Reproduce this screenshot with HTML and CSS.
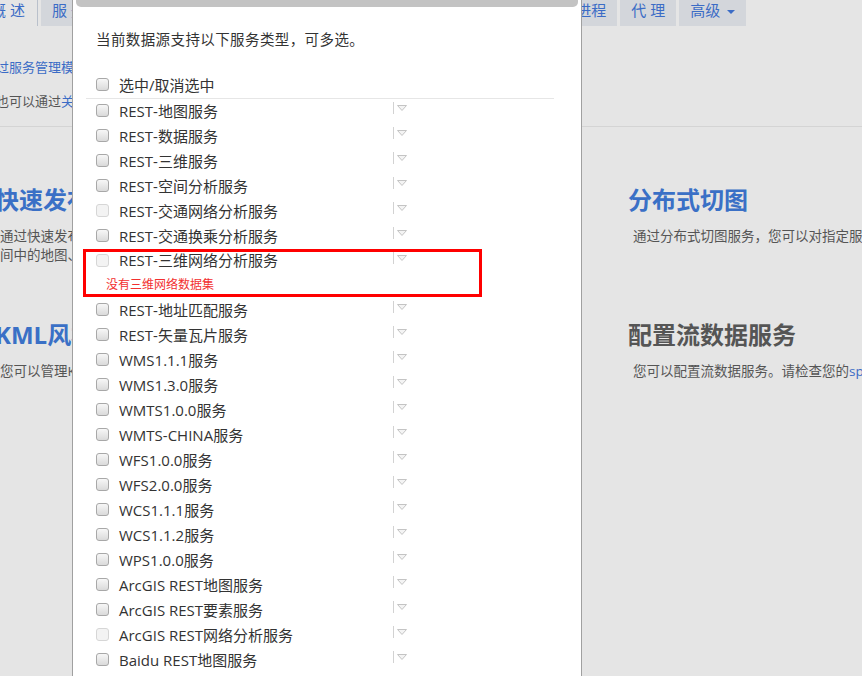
FILE: index.html
```html
<!DOCTYPE html>
<html lang="zh-CN">
<head>
<meta charset="utf-8">
<title>服务管理</title>
<link rel="stylesheet" href="styles.css">
</head>
<body>
<div class="page">
  <nav class="tabs">
    <a class="tab tab-current">概 述</a>
    <a class="tab">服 务</a>
    <a class="tab">集 群</a>
    <a class="tab">安 全</a>
    <a class="tab">日 志</a>
    <a class="tab">监 控</a>
    <a class="tab">扩 展</a>
    <a class="tab">许 可</a>
    <a class="tab tab-wide">系统</a>
    <a class="tab">存储</a>
    <a class="tab">进程</a>
    <a class="tab">代 理</a>
    <a class="tab">高级<span class="caret"></span></a>
  </nav>

  <section class="intro">
    <p><span class="link">过服务管理模块，您可以发布、管理和监控各种类型的 GIS 服务。</span></p>
    <p>也可以通过<span class="link">关联服务</span>，在多个服务之间建立关联。</p>
  </section>
  <hr class="rule">

  <section class="features">
    <div class="feature">
      <h2 class="feature-title">快速发布服务</h2>
      <p class="feature-text">通过快速发布服务，您可以将存储在数据源、工作空<br>间中的地图、数据等资源发布为多种类型的服务。</p>
    </div>
    <div class="feature">
      <h2 class="feature-title">分布式切图</h2>
      <p class="feature-text">通过分布式切图服务，您可以对指定服务中的地图进行切图。</p>
    </div>
    <div class="feature">
      <h2 class="feature-title">KML风格管理</h2>
      <p class="feature-text">您可以管理KML风格文件。</p>
    </div>
    <div class="feature">
      <h2 class="feature-title feature-title-dark">配置流数据服务</h2>
      <p class="feature-text">您可以配置流数据服务。请检查您的<span class="link">spark</span>环境。</p>
    </div>
  </section>
</div>

<div class="modal">
  <div class="modal-top"></div>
  <div class="modal-body">
    <p class="modal-desc">当前数据源支持以下服务类型，可多选。</p>
    <label class="select-all"><input type="checkbox" class="cb"><span class="select-all-text">选中/取消选中</span></label>
    <ul class="svc-list">
      <li class="svc"><input type="checkbox" class="cb"><span class="svc-name">REST-地图服务</span><span class="svc-more"><svg width="10" height="6" viewBox="0 0 10 6"><polygon points="0.5,0.5 9.5,0.5 5,5.5" fill="#f4f4f4" stroke="#c4c4c4" stroke-width="1"/></svg></span></li>
      <li class="svc"><input type="checkbox" class="cb"><span class="svc-name">REST-数据服务</span><span class="svc-more"><svg width="10" height="6" viewBox="0 0 10 6"><polygon points="0.5,0.5 9.5,0.5 5,5.5" fill="#f4f4f4" stroke="#c4c4c4" stroke-width="1"/></svg></span></li>
      <li class="svc"><input type="checkbox" class="cb"><span class="svc-name">REST-三维服务</span><span class="svc-more"><svg width="10" height="6" viewBox="0 0 10 6"><polygon points="0.5,0.5 9.5,0.5 5,5.5" fill="#f4f4f4" stroke="#c4c4c4" stroke-width="1"/></svg></span></li>
      <li class="svc"><input type="checkbox" class="cb"><span class="svc-name">REST-空间分析服务</span><span class="svc-more"><svg width="10" height="6" viewBox="0 0 10 6"><polygon points="0.5,0.5 9.5,0.5 5,5.5" fill="#f4f4f4" stroke="#c4c4c4" stroke-width="1"/></svg></span></li>
      <li class="svc"><input type="checkbox" class="cb" disabled><span class="svc-name">REST-交通网络分析服务</span><span class="svc-more"><svg width="10" height="6" viewBox="0 0 10 6"><polygon points="0.5,0.5 9.5,0.5 5,5.5" fill="#f4f4f4" stroke="#c4c4c4" stroke-width="1"/></svg></span></li>
      <li class="svc"><input type="checkbox" class="cb"><span class="svc-name">REST-交通换乘分析服务</span><span class="svc-more"><svg width="10" height="6" viewBox="0 0 10 6"><polygon points="0.5,0.5 9.5,0.5 5,5.5" fill="#f4f4f4" stroke="#c4c4c4" stroke-width="1"/></svg></span></li>
      <li class="svc-error-box">
        <div class="svc svc-boxed"><input type="checkbox" class="cb" disabled><span class="svc-name">REST-三维网络分析服务</span><span class="svc-more"><svg width="10" height="6" viewBox="0 0 10 6"><polygon points="0.5,0.5 9.5,0.5 5,5.5" fill="#f4f4f4" stroke="#c4c4c4" stroke-width="1"/></svg></span></div>
        <p class="svc-error">没有三维网络数据集</p>
      </li>
      <li class="svc"><input type="checkbox" class="cb"><span class="svc-name">REST-地址匹配服务</span><span class="svc-more"><svg width="10" height="6" viewBox="0 0 10 6"><polygon points="0.5,0.5 9.5,0.5 5,5.5" fill="#f4f4f4" stroke="#c4c4c4" stroke-width="1"/></svg></span></li>
      <li class="svc"><input type="checkbox" class="cb"><span class="svc-name">REST-矢量瓦片服务</span><span class="svc-more"><svg width="10" height="6" viewBox="0 0 10 6"><polygon points="0.5,0.5 9.5,0.5 5,5.5" fill="#f4f4f4" stroke="#c4c4c4" stroke-width="1"/></svg></span></li>
      <li class="svc"><input type="checkbox" class="cb"><span class="svc-name">WMS1.1.1服务</span><span class="svc-more"><svg width="10" height="6" viewBox="0 0 10 6"><polygon points="0.5,0.5 9.5,0.5 5,5.5" fill="#f4f4f4" stroke="#c4c4c4" stroke-width="1"/></svg></span></li>
      <li class="svc"><input type="checkbox" class="cb"><span class="svc-name">WMS1.3.0服务</span><span class="svc-more"><svg width="10" height="6" viewBox="0 0 10 6"><polygon points="0.5,0.5 9.5,0.5 5,5.5" fill="#f4f4f4" stroke="#c4c4c4" stroke-width="1"/></svg></span></li>
      <li class="svc"><input type="checkbox" class="cb"><span class="svc-name">WMTS1.0.0服务</span><span class="svc-more"><svg width="10" height="6" viewBox="0 0 10 6"><polygon points="0.5,0.5 9.5,0.5 5,5.5" fill="#f4f4f4" stroke="#c4c4c4" stroke-width="1"/></svg></span></li>
      <li class="svc"><input type="checkbox" class="cb"><span class="svc-name">WMTS-CHINA服务</span><span class="svc-more"><svg width="10" height="6" viewBox="0 0 10 6"><polygon points="0.5,0.5 9.5,0.5 5,5.5" fill="#f4f4f4" stroke="#c4c4c4" stroke-width="1"/></svg></span></li>
      <li class="svc"><input type="checkbox" class="cb"><span class="svc-name">WFS1.0.0服务</span><span class="svc-more"><svg width="10" height="6" viewBox="0 0 10 6"><polygon points="0.5,0.5 9.5,0.5 5,5.5" fill="#f4f4f4" stroke="#c4c4c4" stroke-width="1"/></svg></span></li>
      <li class="svc"><input type="checkbox" class="cb"><span class="svc-name">WFS2.0.0服务</span><span class="svc-more"><svg width="10" height="6" viewBox="0 0 10 6"><polygon points="0.5,0.5 9.5,0.5 5,5.5" fill="#f4f4f4" stroke="#c4c4c4" stroke-width="1"/></svg></span></li>
      <li class="svc"><input type="checkbox" class="cb"><span class="svc-name">WCS1.1.1服务</span><span class="svc-more"><svg width="10" height="6" viewBox="0 0 10 6"><polygon points="0.5,0.5 9.5,0.5 5,5.5" fill="#f4f4f4" stroke="#c4c4c4" stroke-width="1"/></svg></span></li>
      <li class="svc"><input type="checkbox" class="cb"><span class="svc-name">WCS1.1.2服务</span><span class="svc-more"><svg width="10" height="6" viewBox="0 0 10 6"><polygon points="0.5,0.5 9.5,0.5 5,5.5" fill="#f4f4f4" stroke="#c4c4c4" stroke-width="1"/></svg></span></li>
      <li class="svc"><input type="checkbox" class="cb"><span class="svc-name">WPS1.0.0服务</span><span class="svc-more"><svg width="10" height="6" viewBox="0 0 10 6"><polygon points="0.5,0.5 9.5,0.5 5,5.5" fill="#f4f4f4" stroke="#c4c4c4" stroke-width="1"/></svg></span></li>
      <li class="svc"><input type="checkbox" class="cb"><span class="svc-name">ArcGIS REST地图服务</span><span class="svc-more"><svg width="10" height="6" viewBox="0 0 10 6"><polygon points="0.5,0.5 9.5,0.5 5,5.5" fill="#f4f4f4" stroke="#c4c4c4" stroke-width="1"/></svg></span></li>
      <li class="svc"><input type="checkbox" class="cb"><span class="svc-name">ArcGIS REST要素服务</span><span class="svc-more"><svg width="10" height="6" viewBox="0 0 10 6"><polygon points="0.5,0.5 9.5,0.5 5,5.5" fill="#f4f4f4" stroke="#c4c4c4" stroke-width="1"/></svg></span></li>
      <li class="svc"><input type="checkbox" class="cb" disabled><span class="svc-name">ArcGIS REST网络分析服务</span><span class="svc-more"><svg width="10" height="6" viewBox="0 0 10 6"><polygon points="0.5,0.5 9.5,0.5 5,5.5" fill="#f4f4f4" stroke="#c4c4c4" stroke-width="1"/></svg></span></li>
      <li class="svc"><input type="checkbox" class="cb"><span class="svc-name">Baidu REST地图服务</span><span class="svc-more"><svg width="10" height="6" viewBox="0 0 10 6"><polygon points="0.5,0.5 9.5,0.5 5,5.5" fill="#f4f4f4" stroke="#c4c4c4" stroke-width="1"/></svg></span></li>
    </ul>
  </div>
</div>
</body>
</html>
```

FILE: styles.css
```css
* { box-sizing: border-box; }

html, body {
  margin: 0;
  height: 100%;
}

body {
  position: relative;
  overflow: hidden;
  background: #e5e5e5;
  font-family: "Open Sans", "Noto Sans CJK SC", sans-serif;
  color: #555;
}

/* ---------- underlying page ---------- */
.page {
  margin-left: -5px;
  width: 1400px;
}

.tabs {
  display: flex;
  gap: 3px;
  height: 26px;
}

.tab {
  height: 26px;
  padding: 0 11px;
  font-size: 15px;
  line-height: 20px;
  color: #3b6cc6;
  background: #d3d6db;
  white-space: nowrap;
  text-decoration: none;
}

.tab-current {
  margin-left: -4px;
  padding: 0 12px 0 0;
  background: transparent;
  border-right: 1px solid #b9c0cb;
}

.tab-wide { padding: 0 12px; }

.caret {
  display: inline-block;
  width: 0;
  height: 0;
  margin-left: 7px;
  vertical-align: middle;
  border-left: 4px solid transparent;
  border-right: 4px solid transparent;
  border-top: 4px solid #3b6cc6;
}

.intro {
  padding: 31px 0 0 1px;
  font-size: 13px;
  line-height: 20px;
}

.intro p { margin: 0; }
.intro p + p { margin-top: 14px; }

.link { color: #3b6cc6; }

.rule {
  margin: 15px 0 0;
  border: 0;
  border-top: 1px solid #d4d4d4;
}

.features {
  display: grid;
  grid-template-columns: 633px 633px;
  row-gap: 54px;
  padding: 57px 0 0 0;
}

.feature-title {
  margin: 0;
  font-size: 24px;
  line-height: 32px;
  font-weight: bold;
  color: #3a70c6;
}

.feature-title-dark { color: #555; }

.feature-text {
  margin: 11px 0 0;
  padding-left: 5px;
  font-size: 13.5px;
  line-height: 19px;
  color: #555;
}

/* ---------- modal ---------- */
.modal {
  position: absolute;
  top: 0;
  left: 72px;
  width: 510px;
  height: 720px;
  background: #fff;
  border: 1px solid #a0a0a0;
  border-top: 0;
}

.modal-top {
  height: 7px;
  margin: 0 3px;
  background: #c3c3c3;
  border-radius: 0 0 5px 5px;
}

.modal-body {
  padding: 0 27px 0 13px;
  color: #333;
}

.modal-desc {
  margin: 23px 0 0;
  padding-left: 10px;
  font-size: 14.5px;
  line-height: 20px;
  letter-spacing: 0.4px;
}

.select-all {
  display: flex;
  align-items: center;
  height: 29px;
  margin-top: 20px;
  padding-left: 10px;
  font-size: 15px;
  border-bottom: 1px solid #e6e6e6;
}

.cb {
  appearance: none;
  -webkit-appearance: none;
  flex: none;
  width: 13px;
  height: 13px;
  margin: 0 10px 0 0;
  border: 1px solid #a8a8a8;
  border-radius: 3px;
  background: linear-gradient(#f7f7f7, #dadada);
}

.cb:disabled {
  border-color: #d6d6d6;
  background: #f3f3f3;
}

.svc-list {
  list-style: none;
  margin: -1px 0 0;
  padding: 0;
}

.svc {
  display: flex;
  align-items: center;
  height: 25px;
  padding-left: 10px;
  font-size: 15px;
  line-height: 20px;
}

.svc-name {
  width: 274px;
  white-space: nowrap;
}

.svc-more {
  display: flex;
  gap: 3px;
  height: 12px;
  margin-bottom: 5px;
}

.svc-more::before {
  content: "";
  width: 1px;
  height: 12px;
  background: #d2d2d2;
}

.svc-more svg {
  display: block;
  margin-top: 3px;
}

.svc-error-box {
  width: 399px;
  height: 48px;
  margin: 1px 0 0 -3px;
  border: 3px solid #f00;
}

.svc-boxed { height: 16px; }

.svc-error {
  margin: 9px 0 0;
  padding-left: 20px;
  font-size: 12px;
  line-height: 16px;
  color: #f23030;
}
```
